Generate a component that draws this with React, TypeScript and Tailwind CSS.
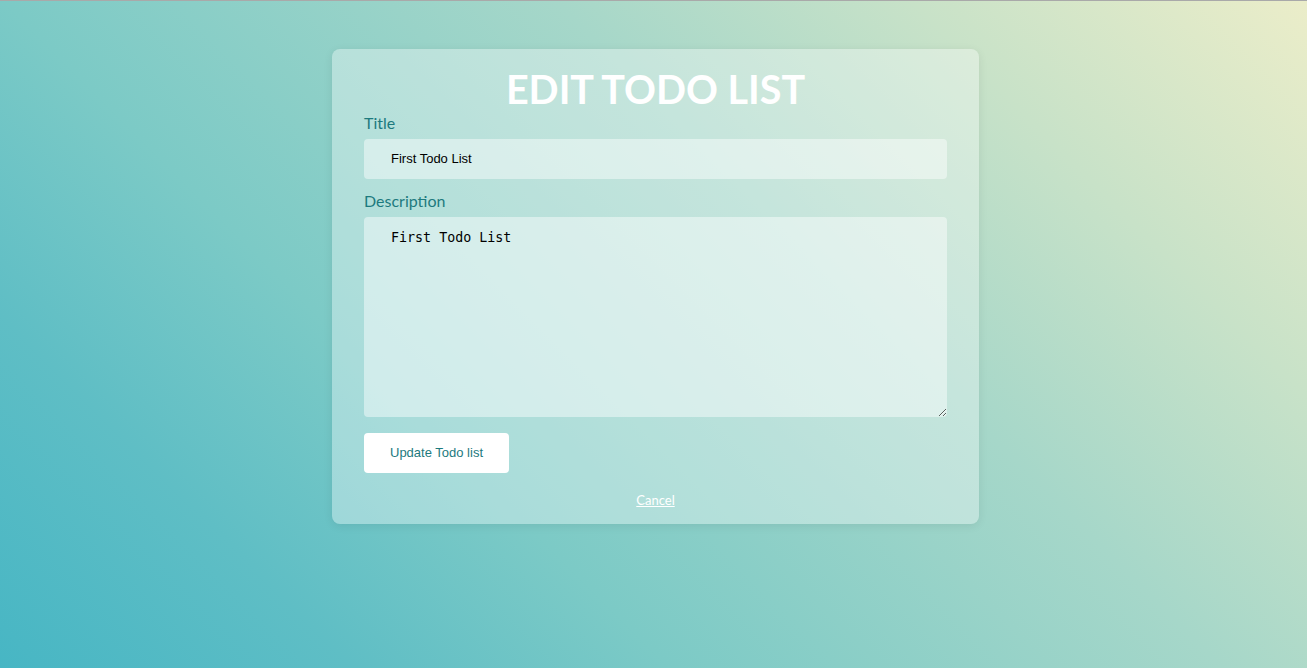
import { useState } from "react";

export default function App() {
  const [title, setTitle] = useState("First Todo List");
  const [description, setDescription] = useState("First Todo List");

  return (
    <main
      className="flex min-h-screen w-full justify-center border-t border-[#a9a9a9] bg-[linear-gradient(45deg,#47b6c4_0%,#5fbec5_18%,#7ccac6_34%,#a6d7c9_62%,#c8e2c8_80%,#ebedc9_100%)] pl-[4px] pt-[48px]"
      style={{ height: 668, fontFamily: "Lato, 'Liberation Sans', sans-serif" }}
    >
      <div className="flex h-fit w-[647px] flex-col rounded-lg bg-white/35 px-8 pb-[15px] pt-[16px] shadow-[0_2px_10px_rgba(0,0,0,0.08)]">
        <h1 className="text-center text-[39.5px] font-bold leading-[48px] text-white">
          EDIT TODO LIST
        </h1>

        <label className="text-[16px] leading-[20px] text-[#1d7a7e]">Title</label>
        <input
          type="text"
          value={title}
          onChange={(event) => setTitle(event.target.value)}
          className="mt-[6px] h-10 w-full rounded bg-white/45 px-[27px] pb-[1px] text-[13px] text-black outline-none"
          style={{ fontFamily: "'Liberation Sans', Arial, sans-serif" }}
        />

        <label className="mt-[12px] text-[16px] leading-[20px] text-[#1d7a7e]">
          Description
        </label>
        <textarea
          value={description}
          onChange={(event) => setDescription(event.target.value)}
          className="mt-[6px] h-[200px] w-full rounded bg-white/45 px-[27px] pt-[11px] text-[13.33px] text-black outline-none"
          style={{ fontFamily: "'DejaVu Sans Mono', monospace" }}
        />

        <button
          className="mt-4 h-10 w-[145px] rounded bg-white text-[13px] text-[#1d7a7e]"
          style={{ fontFamily: "'Liberation Sans', Arial, sans-serif" }}
        >
          Update Todo list
        </button>

        <a href="#" className="mt-[18px] self-center text-[13px] leading-[18px] text-white underline">
          Cancel
        </a>
      </div>
    </main>
  );
}
